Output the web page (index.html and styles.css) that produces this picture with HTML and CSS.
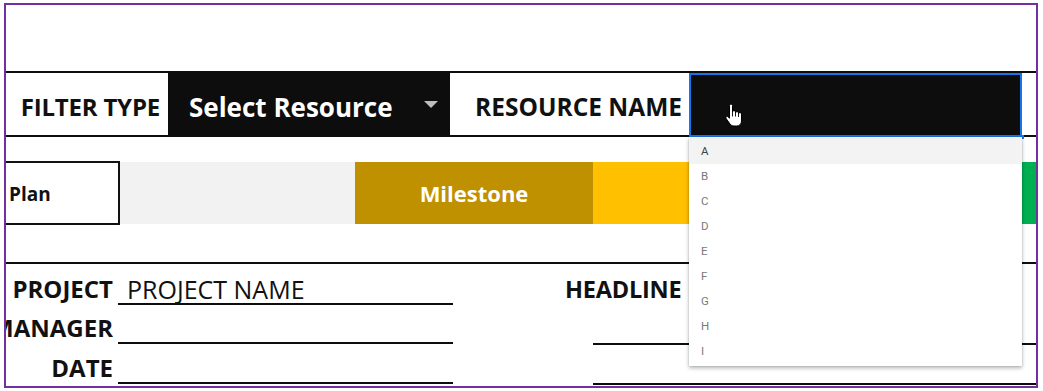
FILE: index.html
```html
<!DOCTYPE html>
<html>
<head>
<meta charset="utf-8">
<link rel="stylesheet" href="styles.css">
</head>
<body>
<div class="frame">
  <div class="top-space"></div>
  <div class="filter-row">
    <div class="cell label-cell">FILTER TYPE</div>
    <div class="cell select-cell">
      <span>Select Resource</span>
      <span class="arrow"></span>
    </div>
    <div class="cell label-cell name-label">RESOURCE NAME</div>
    <div class="cell input-cell">
      <svg class="cursor" width="17" height="24" viewBox="0 0 17 24">
        <path d="M4.5 2.5a1.5 1.5 0 0 1 3 0V9a1.5 1.5 0 0 1 3 0v1a1.5 1.5 0 0 1 3 0v1a1.5 1.5 0 0 1 3 0v7c0 3-2 5-5 5H9c-2 0-3-1-4-2L1.2 15.6a1.3 1.3 0 0 1 2-1.7L4.5 15.3Z" fill="#fff" stroke="#000" stroke-width="1" stroke-linejoin="round"/>
        <path d="M7.5 9v4.5M10.5 10v3.5M13.5 11v3" stroke="#000" stroke-width="0.9" fill="none"/>
      </svg>
    </div>
    <div class="cell rest-cell"></div>
  </div>
  <div class="gap-a"></div>
  <div class="bar-row">
    <div class="plan">Plan</div>
    <div class="bar gray"></div>
    <div class="bar gold">Milestone</div>
    <div class="bar yellow"></div>
    <div class="bar green"></div>
  </div>
  <div class="gap-b"></div>
  <div class="form">
    <div class="form-left">
      <div class="f-label r1">PROJECT</div>
      <div class="f-field r1">PROJECT NAME</div>
      <div class="f-label">MANAGER</div>
      <div class="f-field"></div>
      <div class="f-label">DATE</div>
      <div class="f-field"></div>
    </div>
    <div class="form-right">
      <div class="headline r1">HEADLINE</div>
      <div class="h-line"></div>
      <div class="h-line"></div>
    </div>
  </div>

  <ul class="dropdown">
    <li class="active">A</li>
    <li>B</li>
    <li>C</li>
    <li>D</li>
    <li>E</li>
    <li>F</li>
    <li>G</li>
    <li>H</li>
    <li>I</li>
  </ul>
</div>
</body>
</html>
```

FILE: styles.css
```css
* { box-sizing: border-box; }
html, body { margin: 0; padding: 0; background: #fff; }
body {
  font-family: "Open Sans", "Liberation Sans", sans-serif;
  color: #111;
}
.frame {
  position: relative;
  margin: 3px 0 0 4px;
  width: 1034px;
  height: 385px;
  border: 2px solid #7030a0;
  overflow: hidden;
  background: #fff;
}
.top-space { height: 66px; }

.filter-row {
  display: flex;
  height: 66px;
  border-top: 2px solid #0d0d0d;
  border-bottom: 2px solid #0d0d0d;
}
.cell {
  display: flex;
  align-items: center;
  font-size: 24px;
  font-weight: 700;
  line-height: 28px;
  white-space: nowrap;
  padding-top: 5px;
}
.label-cell {
  width: 162px;
  justify-content: flex-end;
  padding-right: 8px;
  letter-spacing: -0.2px;
}
.name-label {
  width: 239px;
  padding-right: 7px;
  font-size: 24.5px;
  letter-spacing: 0;
}
.select-cell {
  width: 282px;
  background: #0d0d0d;
  color: #fff;
  font-size: 26px;
  justify-content: space-between;
  padding-left: 21px;
  padding-right: 12px;
}
.arrow {
  width: 0;
  height: 0;
  border-left: 7.5px solid transparent;
  border-right: 7.5px solid transparent;
  border-top: 7px solid #bdbdbd;
  margin-top: -5px;
}
.input-cell {
  position: relative;
  width: 333px;
  height: 64px;
  align-self: flex-start;
  background: #0d0d0d;
  border: 2px solid #1a73e8;
  z-index: 1;
}
.input-cell::after {
  content: "";
  position: absolute;
  right: -4px;
  bottom: -4px;
  width: 4px;
  height: 4px;
  background: #1a73e8;
}
.cursor {
  position: absolute;
  left: 34px;
  top: 28px;
}
.rest-cell { flex: 1; }

.gap-a { height: 24px; }

.bar-row {
  display: flex;
  height: 64px;
}
.plan {
  width: 114px;
  border: 2px solid #111;
  border-left: none;
  display: flex;
  align-items: center;
  padding-left: 3px;
  padding-top: 2px;
  font-size: 19px;
  font-weight: 700;
}
.bar {
  margin: 1px 0;
  display: flex;
  align-items: center;
  justify-content: center;
}
.gray { width: 235px; background: #f2f2f2; }
.gold {
  width: 238px;
  background: #bf9000;
  color: #fff;
  font-size: 22px;
  font-weight: 700;
  padding-bottom: 1px;
}
.yellow { width: 300px; background: #ffc000; }
.green { flex: 1; background: #00b050; }

.gap-b { height: 37px; }

.form {
  display: flex;
  border-top: 2px solid #0d0d0d;
}
.form-left {
  display: grid;
  grid-template-columns: 107px 335px;
  grid-auto-rows: 40px;
  column-gap: 5px;
  width: 447px;
}
.form-left .r1 { height: 41px; }
.f-label, .f-field, .headline {
  display: flex;
  align-items: flex-end;
  font-size: 24px;
  line-height: 28px;
  white-space: nowrap;
  border-bottom: 2px solid transparent;
}
.f-label {
  justify-content: flex-end;
  font-weight: 700;
}
.f-field {
  border-bottom-color: #0d0d0d;
  padding-left: 9px;
  font-weight: 400;
  font-size: 25px;
}
.form-right {
  margin-left: 112px;
  flex: 1;
}
.headline {
  height: 41px;
  font-weight: 700;
  font-size: 23.5px;
  letter-spacing: -0.2px;
}
.h-line {
  height: 40px;
  margin-left: 28px;
  border-bottom: 2px solid #0d0d0d;
}

.dropdown {
  position: absolute;
  left: 683px;
  top: 132px;
  width: 333px;
  margin: 0;
  padding: 0 0 2px 0;
  list-style: none;
  background: #fff;
  box-shadow: 0 2px 4px rgba(0,0,0,0.3), 0 0 1px rgba(0,0,0,0.25);
  z-index: 2;
  font-family: Roboto, "Liberation Sans", sans-serif;
  font-size: 11.5px;
  color: #7a7a7a;
}
.dropdown li {
  height: 25px;
  line-height: 25px;
  padding-left: 12px;
}
.dropdown li.active {
  height: 27px;
  padding-top: 2px;
  background: #f3f3f3;
  color: #444;
}
```
